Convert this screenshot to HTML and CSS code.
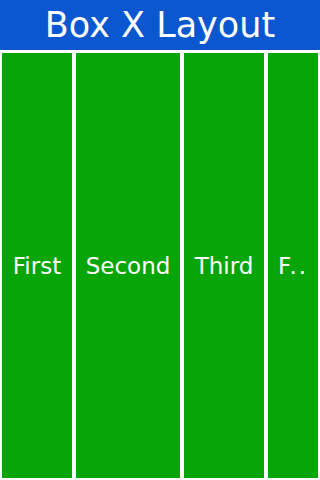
FILE: index.html
```html
<!DOCTYPE html>
<html lang="en">
<head>
  <meta charset="UTF-8" />
  <meta name="viewport" content="width=device-width, initial-scale=1" />
  <title>Box X Layout</title>
  <link rel="stylesheet" href="styles.css">
</head>
<body>
  <header class="title-bar">
    <h1>Box X Layout</h1>
  </header>

  <main class="box-row">
    <div class="box box-first">First</div>
    <div class="box box-second">Second</div>
    <div class="box box-third">Third</div>
    <div class="box box-fourth">F..</div>
  </main>
</body>
</html>
```

FILE: styles.css
```css
:root {
  --title-blue: #0b57cf;
  --box-green: #07a507;
}

* {
  box-sizing: border-box;
  margin: 0;
  padding: 0;
}

html,
body {
  height: 100%;
}

body {
  font-family: 'DejaVu Sans', Verdana, sans-serif;
  background: #fff;
  color: #fff;
  display: flex;
  flex-direction: column;
}

.title-bar {
  height: 50px;
  background: var(--title-blue);
  display: flex;
  align-items: center;
  justify-content: center;
}

h1 {
  font-size: 35px;
  font-weight: normal;
  line-height: 1;
}

.box-row {
  flex: 1;
  display: flex;
  gap: 4px;
  padding: 3px 2px 2px;
}

.box {
  background: var(--box-green);
  display: flex;
  align-items: center;
  justify-content: center;
  font-size: 23px;
  white-space: nowrap;
  overflow: hidden;
}

.box-first { width: 70px; }
.box-second { width: 104px; }
.box-third { width: 80px; }
.box-fourth {
  width: 50px;
  letter-spacing: 2px;
}
```
